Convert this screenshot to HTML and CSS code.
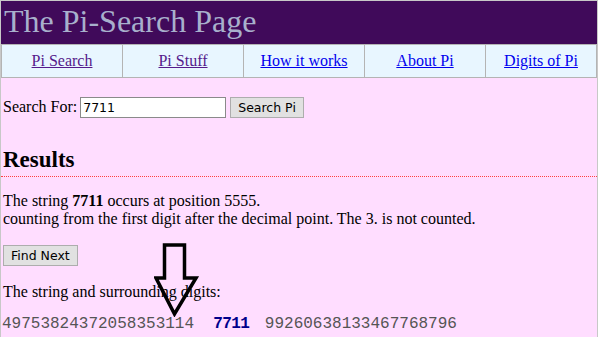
FILE: index.html
```html
<!DOCTYPE html>
<html lang="en">
<head>
    <meta charset="UTF-8">
    <title>The Pi-Search Page</title>
    <link rel="stylesheet" href="styles.css">
</head>
<body>
<div class="page">
    <div class="banner">The Pi-Search Page</div>
    <table class="nav">
        <tr>
            <td><a class="visited" href="#">Pi Search</a></td>
            <td><a class="visited" href="#">Pi Stuff</a></td>
            <td><a href="#">How it works</a></td>
            <td><a href="#">About Pi</a></td>
            <td><a href="#">Digits of Pi</a></td>
        </tr>
    </table>

    <div class="content">
        <form class="search">
            <label for="q">Search For:</label>
            <input type="text" id="q" value="7711">
            <button type="button">Search Pi</button>
        </form>

        <h2>Results</h2>

        <p class="result">The string <b>7711</b> occurs at position 5555.<br>
        counting from the first digit after the decimal point. The 3. is not counted.</p>

        <button type="button" class="next">Find Next</button>

        <p class="around">The string and surrounding digits:</p>
        <div class="digits">49753824372058353114&nbsp; <b>7711</b> 99260638133467768796</div>

        <svg class="arrow" width="46" height="74" viewBox="0 0 46 74">
            <path d="M10.5 2 H30.5 V35 H42 L20.5 71 L2 35 H10.5 Z" fill="none" stroke="#000" stroke-width="3.5" stroke-linejoin="miter"/>
        </svg>
    </div>
</div>
</body>
</html>
```

FILE: styles.css
```css
body {
    margin: 0;
    background: #ffddff;
    font-family: "Liberation Serif", "Times New Roman", serif;
    font-size: 16px;
    color: #000;
}
.page {
    position: relative;
    height: 336px;
    border-top: 1px solid #c8c8c8;
    border-left: 1px solid #c8c8c8;
    border-right: 1px solid #c8c8c8;
}
.banner {
    background: #400a5a;
    color: #a8b0cc;
    font-size: 32px;
    height: 43px;
    line-height: 40px;
    padding-left: 3px;
}
.nav {
    width: 100%;
    table-layout: fixed;
    border-collapse: collapse;
    background: #e8f6ff;
}
.nav td {
    border: 1px solid #b4b4b4;
    height: 32px;
    text-align: center;
    padding: 0;
    width: 120px;
}
.nav td:last-child {
    width: auto;
}
.nav a {
    color: #0000ee;
}
.nav a.visited {
    color: #551a8b;
}
.content {
    padding-left: 2px;
}
.search {
    margin: 18px 0 0;
    display: flex;
    align-items: center;
    height: 22px;
}
.search label {
    margin-right: 3px;
}
.search input {
    width: 140px;
    height: 17px;
    padding: 1px 2px;
    border: 1px solid #8a8a8a;
    font-family: "DejaVu Sans", Tahoma, sans-serif;
    font-size: 12.5px;
    margin: 0 4px 0 0;
}
button {
    font-family: "DejaVu Sans", Tahoma, sans-serif;
    font-size: 12.5px;
    background: #e1e1e1;
    border: 1px solid #adadad;
    height: 21px;
    padding: 0 7px;
}
h2 {
    font-size: 23px;
    margin: 28px 0 0;
    line-height: 27px;
    padding-bottom: 3px;
    border-bottom: 1px dotted #ff4040;
    margin-left: -2px;
    padding-left: 2px;
}
.result {
    margin: 15px 0 0;
    line-height: 18px;
}
.next {
    margin-top: 17px;
    padding: 0 7px;
}
.around {
    margin: 17px 0 0;
    line-height: 18px;
}
.digits {
    margin-top: 14px;
    margin-left: -1px;
    font-family: "Liberation Mono", "Courier New", monospace;
    font-size: 16px;
    color: #555;
    line-height: 18px;
}
.digits b {
    color: #00008b;
    letter-spacing: -0.6px;
    margin-right: 6px;
}
.arrow {
    position: absolute;
    left: 153px;
    top: 242px;
}
```
